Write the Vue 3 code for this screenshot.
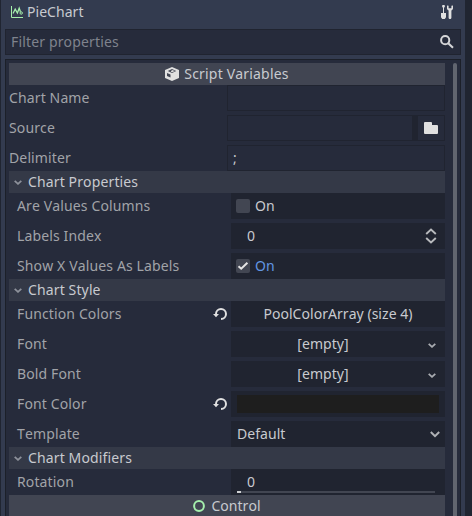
<script setup>
const groups = [
  {
    title: '',
    rows: [
      { label: 'Chart Name', type: 'line', value: '' },
      { label: 'Source', type: 'file', value: '' },
      { label: 'Delimiter', type: 'line', value: ';' },
    ],
  },
  {
    title: 'Chart Properties',
    rows: [
      { label: 'Are Values Columns', type: 'check', value: false },
      { label: 'Labels Index', type: 'spin', value: 0 },
      { label: 'Show X Values As Labels', type: 'check', value: true },
    ],
  },
  {
    title: 'Chart Style',
    rows: [
      { label: 'Function Colors', type: 'button', value: 'PoolColorArray (size 4)', changed: true },
      { label: 'Font', type: 'resource', value: '[empty]' },
      { label: 'Bold Font', type: 'resource', value: '[empty]' },
      { label: 'Font Color', type: 'color', value: '#1e1e1e', changed: true },
      { label: 'Template', type: 'select', value: 'Default' },
    ],
  },
  {
    title: 'Chart Modifiers',
    rows: [{ label: 'Rotation', type: 'range', value: 0 }],
  },
]
</script>

<template>
  <div class="editor">
    <main class="dock">
      <header class="title">
        <svg width="12" height="12" viewBox="0 0 12 12" fill="none" stroke="#a5efac">
          <path d="M.5 0v11.5H12" />
          <path d="M2 7.5 4.2 3.2 6.4 7 8.2 2.2l1.3 3.6" stroke-width="1.3" />
          <circle cx="10.2" cy="7" r="1.2" />
        </svg>
        <span>PieChart</span>
        <svg class="tools" width="12" height="14" viewBox="0 0 12 14" fill="#e0e0e0">
          <path d="M1.5 0h2l.5 1.2L3 3v5h2v4.2L3.8 14H1.2L0 12.2V8h2V3L1 1.2z" />
          <path d="M6 .5v2.7c0 1 .6 1.8 1.6 2.2v7.4c0 1.6 2.8 1.6 2.8 0V5.4c1-.4 1.6-1.2 1.6-2.2V.5l-1.6.3v2.4H7.6V.8z" />
        </svg>
      </header>
      <div class="filter">
        <span>Filter properties</span>
        <svg width="14" height="14" viewBox="0 0 14 14" fill="none" stroke="#d5d6d8" stroke-width="2">
          <circle cx="5.2" cy="5.2" r="4.1" />
          <path d="m8.2 8.2 4.8 4.6" />
        </svg>
      </div>
      <section class="panel">
        <div class="properties">
          <div class="category">
            <svg width="14" height="14" viewBox="0 0 14 14">
              <path d="m7 0 7 3v8l-7 3-7-3V3z" fill="#e0e0e0" />
              <path d="m2.8 4 4.2-2L11.2 4 7 6zM2 6l3.5 1.6v3L2 9z" fill="#414552" />
              <path d="m7 2.9 3 1.2-3 1.2-1.3-.6z" fill="#e0e0e0" />
            </svg>
            <span>Script Variables</span>
          </div>
          <template v-for="group in groups" :key="group.title">
            <div v-if="group.title" class="section">
              <svg width="8" height="5" viewBox="0 0 8 5" fill="none" stroke="#8e929b" stroke-width="1.8"><path d="m.7.8 3.3 3 3.3-3" /></svg>
              <span>{{ group.title }}</span>
            </div>
            <div class="rows" :class="{ nested: group.title }">
              <div v-for="row in group.rows" :key="row.label" class="row">
                <span class="label">{{ row.label }}</span>
                <svg v-if="row.changed" class="revert" width="14" height="12" viewBox="0 0 14 12">
                  <path d="M3 6.6V6a5 5 0 1 1 5 5" fill="none" stroke="#e0e0e0" stroke-width="2" />
                  <path d="M0 6h6L3 9.3z" fill="#e0e0e0" />
                </svg>
                <div class="value" :class="row.type">
                  <template v-if="row.type === 'file'">
                    <div class="path">{{ row.value }}</div>
                    <div class="browse">
                      <svg width="14" height="12" viewBox="0 0 14 12" fill="#e0e0e0"><path d="M1 0h6q1 0 1 1v2h5q1 0 1 1v7q0 1-1 1H1q-1 0-1-1V1q0-1 1-1" /></svg>
                    </div>
                  </template>
                  <template v-else-if="row.type === 'check'">
                    <div class="box">
                      <svg v-if="row.value" width="14" height="14" viewBox="0 0 14 14" fill="none" stroke="#e5e5e5" stroke-width="2"><path d="m2.5 7.2 2.7 2.5 6.2-6" /></svg>
                    </div>
                    <span :class="{ on: row.value }">On</span>
                  </template>
                  <div v-else-if="row.type === 'color'" class="swatch" :style="{ background: row.value }"></div>
                  <template v-else>
                    <span>{{ row.value }}</span>
                    <svg v-if="row.type === 'spin'" width="12" height="16" viewBox="0 0 12 16" fill="none" stroke="#b8babd" stroke-width="1.9"><path d="m1.2 6 4.8-4.4L10.8 6M1.2 10 6 14.4l4.8-4.4" /></svg>
                    <svg v-if="row.type === 'resource'" width="8" height="5" viewBox="0 0 8 5" fill="none" stroke="#a9acb1" stroke-width="1.8"><path d="m.7.8 3.3 3 3.3-3" /></svg>
                    <svg v-if="row.type === 'select'" width="10" height="7" viewBox="0 0 10 7" fill="none" stroke="#b0b2b6" stroke-width="2"><path d="m.8 1 4.2 4.2L9.2 1" /></svg>
                    <div v-if="row.type === 'range'" class="track"><i></i></div>
                  </template>
                </div>
              </div>
            </div>
          </template>
          <div class="category control">
            <svg width="12" height="12" viewBox="0 0 12 12" fill="none" stroke="#a5efac" stroke-width="2"><circle cx="6" cy="6" r="4.9" /></svg>
            <span>Control</span>
          </div>
        </div>
        <div class="scrollbar"></div>
      </section>
    </main>
  </div>
</template>

<style>
body {
  overflow: hidden;
}
</style>

<style scoped>
* {
  box-sizing: border-box;
}
svg {
  display: block;
  flex: none;
}
.editor {
  width: 472px;
  height: 516px;
  overflow: hidden;
  padding: 0 7px 0 1px;
  background: #202531;
  font: 14px/22px "Noto Sans", sans-serif;
  font-kerning: none;
  letter-spacing: 0.04px;
  color: #c8cacf;
  white-space: nowrap;
}
.dock {
  height: 516px;
  padding: 0 4px;
  background: #333b4f;
  display: flex;
  flex-direction: column;
}
.title {
  height: 29px;
  padding: 0 8px 5px 6px;
  display: flex;
  align-items: center;
  gap: 4px;
}
.tools {
  margin-left: auto;
}
.filter {
  height: 26px;
  margin-bottom: 4px;
  border: 1px solid #202430;
  background: #262b3b;
  padding: 0 6px 0 5px;
  display: flex;
  align-items: center;
  justify-content: space-between;
  letter-spacing: 0.15px;
  color: #7f838d;
}
.panel {
  flex: 1;
  min-height: 0;
  border: 1px solid #1c2029;
  border-bottom: 0;
  background: #262b3b;
  padding: 3px 3px 0;
  display: flex;
  justify-content: space-between;
}
.properties {
  width: 436px;
}
.category {
  height: 22px;
  display: flex;
  align-items: center;
  justify-content: center;
  gap: 5px;
  letter-spacing: 0.18px;
  background: #414552;
}
.control {
  gap: 6px;
  letter-spacing: 0.04px;
}
.section {
  height: 22px;
  display: flex;
  align-items: center;
  gap: 6px;
  padding-left: 5px;
  letter-spacing: 0.13px;
  background: #343947;
}
.rows {
  display: grid;
  gap: 4px;
}
.nested {
  padding-left: 8px;
}
.row {
  height: 26px;
  display: flex;
  align-items: center;
}
.label {
  letter-spacing: 0.13px;
  color: #a1a3a8;
}
.revert {
  margin-left: auto;
}
.value {
  width: 218px;
  height: 26px;
  margin-left: auto;
  display: flex;
  align-items: center;
}
.nested .value {
  width: 214px;
  background: #202430;
}
.revert + .value {
  margin-left: 4px;
}
.line,
.path {
  border: 1px solid #202430;
  padding-left: 5px;
}
.file {
  background: #202430;
}
.path {
  flex: 1;
  height: 26px;
  border-right: 0;
  background: #262b3b;
}
.browse {
  width: 33px;
  height: 26px;
  border: 1px solid #202430;
  border-left: 6px solid #202430;
  background: #262b3b;
  display: flex;
  align-items: center;
  justify-content: center;
}
.check {
  gap: 5px;
  padding-left: 5px;
}
.box {
  width: 14px;
  height: 14px;
  border-radius: 2px;
  background: #424652;
}
.on {
  color: #6296e2;
}
.spin {
  padding: 0 8px 0 16px;
  justify-content: space-between;
}
.button {
  justify-content: center;
}
.resource {
  padding: 0 9px 0 0;
}
.resource span {
  flex: 1;
  padding-right: 13px;
  text-align: center;
}
.resource svg {
  margin-top: 2px;
}
.color {
  padding: 4px 6px;
}
.swatch {
  width: 100%;
  height: 18px;
}
.select {
  padding: 0 5px 0 6px;
  justify-content: space-between;
}
.range {
  flex-direction: column;
  align-items: flex-start;
  justify-content: space-between;
  padding: 2px 10px 2px 6px;
}
.range span {
  padding-left: 10px;
  height: 20px;
}
.track {
  width: 198px;
  height: 2px;
  background: #424652;
}
.track i {
  display: block;
  width: 4px;
  height: 2px;
  background: #d0d1d4;
}
.scrollbar {
  width: 4px;
  border-radius: 2px 2px 0 0;
  background: #61656f;
}
</style>
